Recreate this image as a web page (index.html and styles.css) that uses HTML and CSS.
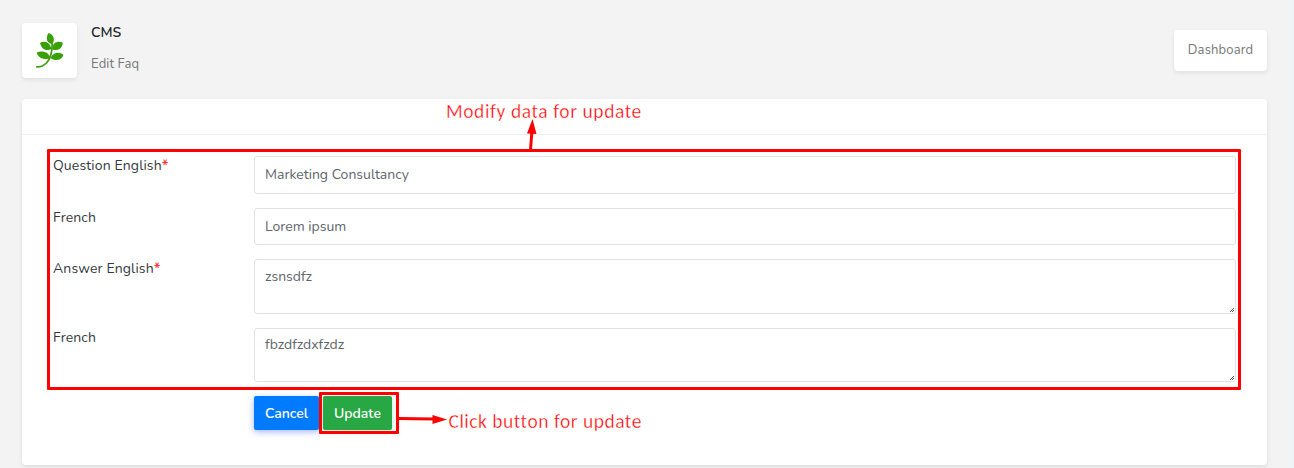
FILE: index.html
```
<!DOCTYPE html>
<html lang="en">
<head>
<meta charset="utf-8">
<title>CMS - Edit Faq</title>
<link rel="stylesheet" href="styles.css">
</head>
<body>
<div class="page">
  <header class="page-head">
    <div class="head-icon">
      <svg width="55" height="55" viewBox="0 0 55 55" fill="#3aa008">
        <path d="M26.700 10C30.500 11.300 32 14 31.800 17.200C31.600 19 31 20.200 30 21.300C26.500 20.300 24.800 18.300 24.800 15.500C24.800 13.300 25.500 11.300 26.700 10Z"/>
        <path d="M18 20C20.500 18.400 23.700 18.400 26 19.900C28 21.200 29 23.700 29.500 26.300C26 27.500 22.700 27.200 20.700 25.200C19.300 23.800 18.600 22 18 20Z"/>
        <path d="M40.700 19.500C37.500 18.300 34.500 18.600 32.500 20.300C31 21.800 30.300 24.200 30.200 26.600C33.500 27.600 36.700 27 38.700 25C40 23.500 40.700 21.500 40.700 19.500Z"/>
        <path d="M14.700 29.500C17.500 28 21.500 28 24.200 29.600C26.400 30.900 27.800 33 28.300 35.200C24.800 36.500 20.800 36.400 18.200 34.600C16.300 33.200 15.200 31.400 14.700 29.500Z"/>
        <path d="M41.300 31.700C38.500 29.700 35.200 29.300 32.500 30.500C30.500 31.500 29.200 33.300 28.700 35.300C31.500 37.300 35.300 37.600 38.200 36.100C40 35 41 33.400 41.300 31.700Z"/>
        <path d="M30.200 20.500C30.200 30 28.500 36 24.500 40C21.500 43 18 44.200 14.200 43.900" fill="none" stroke="#3aa008" stroke-width="1.700"/>
      </svg>
    </div>
    <div class="head-text">
      <h1 class="title">CMS</h1>
      <p class="subtitle">Edit Faq</p>
    </div>
    <a class="dashboard"><span>Dashboard</span></a>
  </header>
  <main class="card">
    <div class="card-head"></div>
    <form class="form">
      <label class="lbl" for="q1">Question English<b>*</b></label>
      <input class="field" id="q1" value="Marketing Consultancy">
      <label class="lbl" for="q2">French</label>
      <input class="field" id="q2" value="Lorem ipsum">
      <label class="lbl" for="a1">Answer English<b>*</b></label>
      <div class="area-wrap">
        <textarea class="field area area-first" id="a1" spellcheck="false">zsnsdfz</textarea>
        <svg class="grip" width="4" height="4" fill="#555"><path d="M3 0h1v1h-1zM2 1h1v1h-1zM1 2h1v1h-1zM3 2h1v1h-1zM0 3h1v1h-1zM2 3h1v1h-1z"/></svg>
      </div>
      <label class="lbl" for="a2">French</label>
      <div class="area-wrap">
        <textarea class="field area" id="a2" spellcheck="false">fbzdfzdxfzdz</textarea>
        <svg class="grip" width="4" height="4" fill="#555"><path d="M3 0h1v1h-1zM2 1h1v1h-1zM1 2h1v1h-1zM3 2h1v1h-1zM0 3h1v1h-1zM2 3h1v1h-1z"/></svg>
      </div>
    </form>
    <div class="actions">
      <button class="btn cancel" type="button">Cancel</button>
      <button class="btn update" type="button">Update</button>
    </div>
  </main>
</div>
<div class="mark mark-form"></div>
<div class="mark mark-update"></div>
<svg class="arrows" width="1294" height="468" viewBox="0 0 1294 468">
  <path d="M530.500 150L532 130M398 418.500L434 419" fill="none" stroke="#f00" stroke-width="3"/>
  <path d="M532.500 119L536.500 134L527 133.500ZM447 419.500L432.500 424V415Z" fill="#f00"/>
</svg>
<div class="note note-form">Modify data for update</div>
<div class="note note-update">Click button for update</div>
</body>
</html>
```
FILE: styles.css
```
* { box-sizing: border-box; }
body {
  margin: 0;
  width: 1294px;
  height: 468px;
  overflow: hidden;
  position: relative;
  background: linear-gradient(90deg, #f3f3f3 1289px, #f1f2f4 1289px);
  font-family: Nunito, Lato, sans-serif;
  font-size: 14px;
  color: #343a40;
}
.page { padding: 23px 27px 0 22px; }
.page-head { display: flex; height: 76px; }
.head-icon {
  width: 55px; height: 55px;
  background: #fff;
  border-radius: 4px;
  box-shadow: 0 2px 4px rgba(0,0,0,.08);
}
.head-icon svg { display: block; }
.head-text { margin-left: 14px; flex: 1; }
.title { margin: 0; font-size: 14px; line-height: 20px; font-weight: 600; color: #212529; }
.subtitle { margin: 11px 0 0; font-size: 13px; line-height: 20px; color: #777; letter-spacing: .1px; }
.dashboard {
  width: 93px; height: 41px; margin-top: 7px;
  display: flex; align-items: center; justify-content: center;
  padding-bottom: 1px;
  background: #fff; color: #777;
  border-radius: 4px;
  box-shadow: 0 2px 4px rgba(0,0,0,.08);
  font-size: 13px;
  letter-spacing: .15px;
}
.card {
  height: 366px;
  background: #fff;
  border-radius: 4px;
  box-shadow: 0 2px 4px rgba(0,0,0,.09);
}
.card-head { height: 36px; border-bottom: 1px solid #eef0f3; }
.form {
  display: grid;
  grid-template-columns: 201px 982px;
  grid-template-rows: 38px 37px 55px 54px;
  row-gap: 14px;
  padding: 21px 0 0 31px;
}
.lbl { font-size: 14px; line-height: 20px; letter-spacing: .13px; }
.lbl b { color: #f33; font-weight: 500; font-size: 15px; line-height: 1; position: relative; top: 1px; }
.field {
  width: 100%; height: 100%;
  margin: 0; padding: 0 10px 1px;
  border: 1px solid #e2e2e2;
  border-radius: 3px;
  background: #fff;
  color: #60666c;
  font: 14px/20px Nunito, Lato, sans-serif;
  outline: 0;
}
.area-wrap { position: relative; }
.area { padding-top: 6px; resize: none; overflow: hidden; display: block; }
.area-first { padding-top: 7px; }
.grip { position: absolute; right: 2px; bottom: 2px; }
.actions { display: flex; gap: 4px; padding: 14px 0 0 232px; }
.btn {
  height: 34px; border: 0; border-radius: 2px; padding: 0;
  color: #fff;
  font: 600 14px Nunito, Lato, sans-serif;
}
.cancel { width: 65px; background: #007bff; box-shadow: 0 2px 6px rgba(80,110,240,.5); }
.update { width: 69px; background: #28a745; box-shadow: 0 2px 6px rgba(80,180,110,.35); }
.mark { position: absolute; border: 3px solid #f00; border-radius: 1px; }
.mark-form { left: 47px; top: 149px; width: 1194px; height: 241px; }
.mark-update { left: 319px; top: 392px; width: 80px; height: 42px; }
.arrows { position: absolute; left: 0; top: 0; pointer-events: none; }
.note {
  position: absolute;
  font: 19.5px/24px Calibri, Carlito, Lato, sans-serif;
  letter-spacing: .57px;
  color: #f00;
  -webkit-text-stroke: .35px #fff;
  white-space: nowrap;
}
.note-form { left: 446px; top: 99px; }
.note-update { left: 448.500px; top: 409px; letter-spacing: .5px; }
```
